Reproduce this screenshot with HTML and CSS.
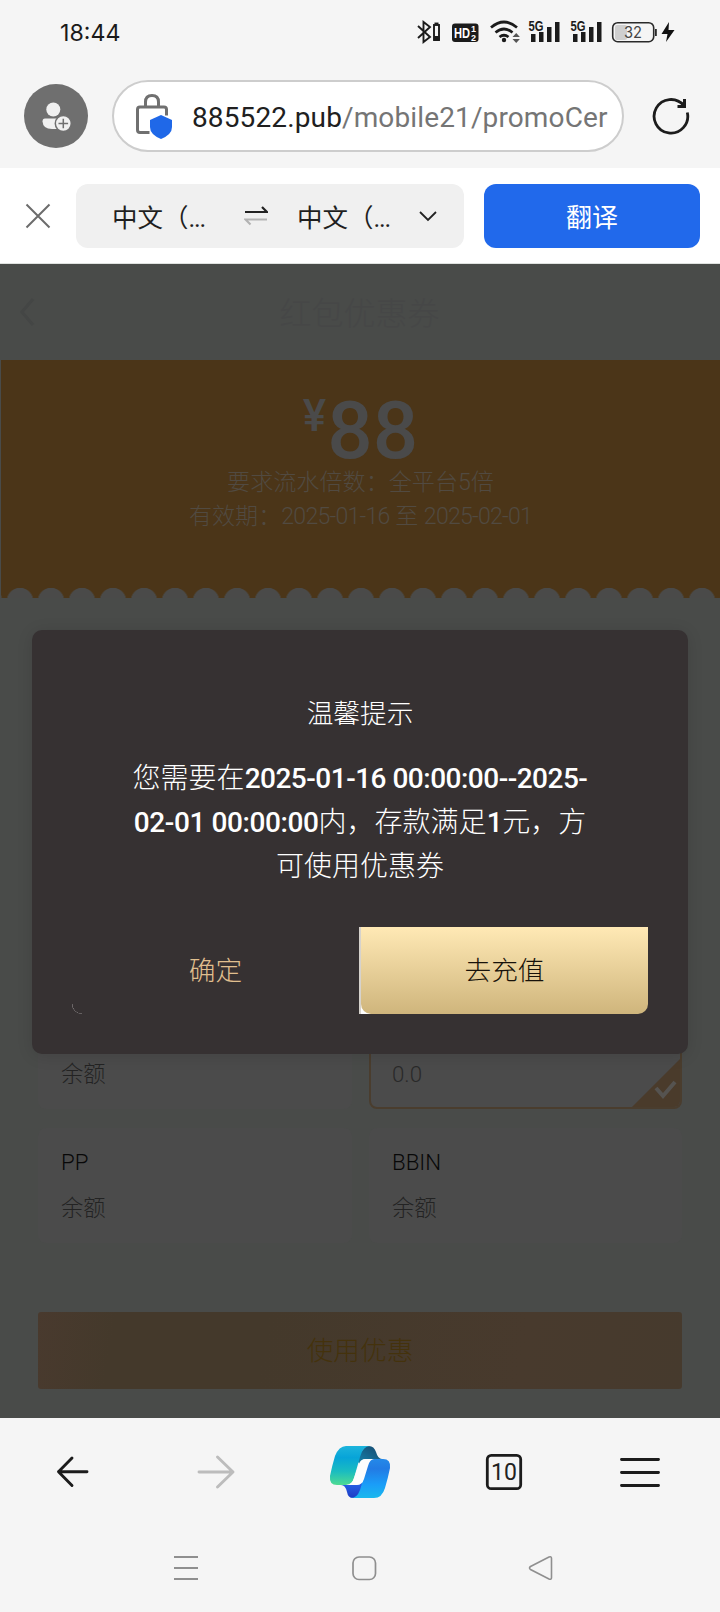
FILE: index.html
```html
<!DOCTYPE html>
<html lang="zh-CN">
<head>
<meta charset="utf-8">
<title>红包优惠券</title>
<link rel="stylesheet" href="styles.css">
</head>
<body>
<div class="screen">
  <header class="browser-top">
    <div class="status">
      <span class="clock">18:44</span>
      <svg class="status-icons" width="264" height="30" viewBox="412 17 264 30">
        <g fill="none" stroke="#1b1b1b" stroke-width="1.900">
          <path d="M418 26l12 11-6.500 5V22l6.500 5-12 11"/>
          <rect x="434" y="25" width="5" height="15"/><path d="M434.500 23.500h4"/>
        </g>
        <rect x="434" y="36" width="5.500" height="5" fill="#1b1b1b"/>
        <rect x="452" y="23.500" width="26.500" height="18.500" rx="3" fill="#1b1b1b"/>
        <text x="454" y="38.300" class="hd" textLength="16" lengthAdjust="spacingAndGlyphs">HD</text>
        <text x="471" y="32.300" class="hd-n">1</text><text x="471" y="40.800" class="hd-n">2</text>
        <g fill="none" stroke="#1b1b1b" stroke-width="2.700">
          <path d="M491 27.500q13-11 26 0"/><path d="M495.500 32.500q8.500-7 17 0"/><path d="M499.500 37q4.500-3.500 9 0"/>
        </g>
        <circle cx="504" cy="40" r="2.200" fill="#1b1b1b"/>
        <path d="M512.500 37l3.700-4 3.700 4zM512.500 39l3.700 4 3.700-4z" fill="#555"/>
        <g fill="#1b1b1b">
          <text x="528.500" y="31" class="net" textLength="15" lengthAdjust="spacingAndGlyphs">5G</text>
          <path d="M531 34h4.500v8H531zM539 32h4.500v10H539zM547 27h4.500v15H547zM555 22h4.500v20H555z"/>
          <text x="570.500" y="31" class="net" textLength="15" lengthAdjust="spacingAndGlyphs">5G</text>
          <path d="M573 34h4.500v8H573zM581 32h4.500v10H581zM589 27h4.500v15H589zM597 22h4.500v20H597z"/>
        </g>
        <rect x="615" y="25" width="12" height="15" rx="2" fill="#cfcfcf"/>
        <rect x="612.700" y="22.700" width="41" height="19" rx="5" fill="none" stroke="#2a2a2a" stroke-width="1.600"/>
        <path d="M655 29h1.800v7H655z" fill="#2a2a2a"/>
        <text x="624" y="38" class="bat" textLength="18" lengthAdjust="spacingAndGlyphs">32</text>
        <path d="M669 22l-7.500 12h6l-1.500 8 8.500-12h-6z" fill="#111"/>
      </svg>
    </div>
    <div class="address">
      <svg class="avatar" width="64" height="64" viewBox="24 84 64 64">
        <circle cx="56" cy="116" r="32" fill="#6f6f6f"/>
        <circle cx="53.300" cy="109.500" r="7" fill="#f0f0f0"/>
        <path d="M45 118.500h17v10.500H52q-9 0-9.500-7.500 0-3 2.500-3z" fill="#f0f0f0"/>
        <circle cx="63.300" cy="123.500" r="8" fill="#f0f0f0" stroke="#6f6f6f" stroke-width="1.500"/>
        <path d="M58.500 123.500h9.600M63.300 118.700v9.600" stroke="#6f6f6f" stroke-width="1.500"/>
      </svg>
      <div class="url">
        <svg width="40" height="50" viewBox="134 93 40 50">
          <g fill="none" stroke="#707070" stroke-width="3">
            <path d="M149.500 134.500H140q-2.500 0-2.500-2.500v-20.500q0-2.500 2.500-2.500h24q2.500 0 2.500 2.500v6"/>
            <path d="M145.500 109v-5q0-6.500 6.500-6.500t6.500 6.500v5"/>
          </g>
          <path d="M161 117l-11 5v7q0 7.500 11 12 11-4.500 11-12v-7z" fill="#1f68e8"/>
        </svg>
        <span class="url-text"><b>885522.pub</b>/mobile21/promoCer</span>
      </div>
      <svg class="reload" width="40" height="40" viewBox="652 96 40 40" fill="none" stroke="#1c1c1c" stroke-width="2.800">
        <path d="M688.300 112.500A16.800 16.800 0 1 1 684.800 105.500"/>
        <path d="M685.500 99v7.500H678.500" stroke-width="3"/>
      </svg>
    </div>
  </header>

  <section class="translate">
    <svg width="26" height="26" viewBox="0 0 26 26"><path d="M1.500 1.500l23 23M24.500 1.500l-23 23" stroke="#6c6c6c" stroke-width="2"/></svg>
    <div class="langs">
      <span>中文（<i>...</i></span>
      <svg class="swap" width="24" height="20" viewBox="244 206 24 20" fill="none" stroke-width="2.200">
        <path d="M245 212h22l-5-5" stroke="#222"/><path d="M267 219.500h-21.500l5 5" stroke="#b3b3b3"/>
      </svg>
      <span>中文（<i>...</i></span>
      <svg class="drop" width="18" height="12" viewBox="0 0 18 12"><path d="M1 2l8 8 8-8" fill="none" stroke="#222" stroke-width="1.800"/></svg>
    </div>
    <button class="go">翻译</button>
  </section>

  <main class="page">
    <div class="page-head">
      <svg class="back" width="18" height="30" viewBox="0 0 18 30"><path d="M16 2L5 15l11 13" fill="none" stroke="#444645" stroke-width="3"/></svg>
      <h1>红包优惠券</h1>
    </div>
    <section class="coupon">
      <div class="amount"><sup>¥</sup>88</div>
      <p>要求流水倍数：全平台5倍</p>
      <p class="valid">有效期：<span>2025-01-16</span> 至 <span>2025-02-01</span></p>
    </section>
    <section class="wallets">
      <div class="card"><span class="bal">余额</span></div>
      <div class="card on"><span class="bal">0.0</span>
        <svg class="tick" width="48" height="48" viewBox="0 0 48 48"><path d="M48 0v48H0z" fill="#4a3b2b"/><path d="M24 29l7 8 12-14" fill="none" stroke="#555350" stroke-width="4"/></svg>
      </div>
      <div class="card"><span class="name">PP</span><span class="bal">余额</span></div>
      <div class="card"><span class="name">BBIN</span><span class="bal">余额</span></div>
    </section>
    <button class="use">使用优惠</button>

    <div class="dialog">
      <h2>温馨提示</h2>
      <p>您需要在<b class="from">2025-01-16 00:00:00--2025-</b><br><b>02-01 00:00:00</b>内，存款满足<b>1</b>元，方<br>可使用优惠券</p>
      <div class="actions">
        <button class="ok">确定</button>
        <div class="pay-wrap"><button class="pay">去充值</button></div>
      </div>
    </div>
  </main>

  <nav class="tools">
    <svg width="720" height="108" viewBox="0 1418 720 108" fill="none" stroke-linecap="round" stroke-linejoin="round">
      <defs>
        <linearGradient id="ca" x1="0" y1="0" x2="0" y2="1"><stop offset="0" stop-color="#1db4dc"/><stop offset=".3" stop-color="#07a4d8"/><stop offset=".65" stop-color="#1abcc0"/><stop offset="1" stop-color="#4fdb92"/></linearGradient>
        <linearGradient id="cb" x1="0" y1="0" x2="0" y2="1"><stop offset="0" stop-color="#2489e8"/><stop offset=".25" stop-color="#227be4"/><stop offset=".65" stop-color="#1a9df8"/><stop offset="1" stop-color="#1ab8ed"/></linearGradient>
        <linearGradient id="cc" x1="1" y1="0" x2="0" y2="1"><stop offset="0" stop-color="#16466c"/><stop offset="1" stop-color="#1686b0"/></linearGradient>
        <linearGradient id="cd" x1="0" y1="0" x2="0" y2="1"><stop offset="0" stop-color="#2868ee"/><stop offset="1" stop-color="#1d3cc4"/></linearGradient>
      </defs>
      <path d="M58.500 1471.700H87M72 1458l-13.500 13.700 13.500 13.700" stroke="#1c1c1c" stroke-width="2.900"/>
      <path d="M199 1472h34M217.500 1457l15.500 15-15.500 15" stroke="#bcbcbc" stroke-width="2.900"/>
      <path d="M366 1446h3q5 0 7 6 2 7 6 7h-16q-4 0-6 5l-5-5z" fill="url(#cc)"/>
      <path d="M341 1485h12q5 0 7-5l4 6-6 12h-5q-5 0-6-6-1.500-7-6-7z" fill="url(#cd)"/>
      <path d="M346 1446h24q-7 0-10 11l-6 21q-2 7-8 7h-9q-8 0-7-9 2-10 5-20 4-10 11-10z" fill="url(#ca)"/>
      <path d="M374 1459h9q8 0 7 9-2 10-5 20-3 10-11 10h-23q6 0 9-8l7-24q2-7 6-7z" fill="url(#cb)"/>
      <path d="M365.500 1459H374q-4 0-6 7l-4 13q-2 6-7 6H346q6 0 8-7l5-14q1.500-5 6.500-5z" fill="#fdfdfd"/>
      <rect x="487.300" y="1455.300" width="33.400" height="33.400" rx="4" stroke="#1c1c1c" stroke-width="2.800"/>
      <text x="504" y="1480" class="tabs" text-anchor="middle">10</text>
      <path d="M621.500 1459.500h37M621.500 1472.500h37M621.500 1485.500h37" stroke="#1c1c1c" stroke-width="2.900"/>
    </svg>
  </nav>
  <nav class="system">
    <svg width="720" height="86" viewBox="0 1526 720 86" fill="none" stroke="#8f8f8f" stroke-width="1.900">
      <path d="M174 1557h24M174 1568h24M174 1579h24"/>
      <rect x="353" y="1557" width="22.500" height="22.500" rx="6" stroke-width="1.700"/>
      <path d="M530.500 1566.500L549 1557q2.500-1 2.500 1.500v19q0 2.500-2.500 1.500l-18.500-9.500q-2-1.500 0-3z" stroke-width="1.600"/>
    </svg>
  </nav>
</div>
</body>
</html>
```

FILE: styles.css
```css
* { box-sizing: border-box; }
body { margin: 0; font-family: Roboto, "Noto Sans CJK SC", sans-serif; }
h1, h2, p { margin: 0; font-weight: 300; }
button { border: 0; padding: 0; font: inherit; }
svg { display: block; flex: none; }

.screen { width: 720px; height: 1612px; display: flex; flex-direction: column; background: #f5f5f5; overflow: hidden; }

.browser-top { height: 168px; }
.status { height: 80px; padding: 17px 44px 0 60px; display: flex; justify-content: space-between; align-items: flex-start; }
.clock { font: 400 23.200px/32px Inter, sans-serif; color: #1a1a1a; }
.hd { font: 700 15px "Liberation Sans", sans-serif; fill: #fff; }
.hd-n { font: 700 9px "Liberation Sans", sans-serif; fill: #fff; }
.net { font: 700 14.500px "Liberation Sans", sans-serif; }
.bat { font: 400 15.500px Inter, sans-serif; fill: #444; }

.address { display: flex; align-items: center; height: 72px; padding-left: 24px; }
.url { display: flex; align-items: center; width: 512px; height: 72px; margin: 0 28px 0 24px; padding-left: 20px; border: 2px solid #cdcdcd; border-radius: 36px; background: #fff; overflow: hidden; }
.reload { margin-left: -1px; }
.url-text { margin-left: 18px; padding-top: 4px; font-size: 28px; line-height: 36px; letter-spacing: .13px; white-space: nowrap; color: #757575; }
.url-text b { font-weight: 400; color: #202020; }

.translate { display: flex; align-items: center; height: 96px; padding: 0 20px 0 25px; background: #fff; border-bottom: 1px solid #dfe2df; }
.langs { display: flex; align-items: center; width: 388px; height: 64px; margin: 0 20px 0 25px; padding-left: 36px; border-radius: 12px; background: #f0f0f0; font-size: 25.500px; color: #1f1f1f; white-space: nowrap; }
.langs span { width: 96px; padding-bottom: 1px; }
.langs i { font-style: normal; letter-spacing: -1.200px; }
.swap { margin: 0 29px 0 36px; }
.drop { margin-left: 26px; }
.go { width: 216px; height: 64px; padding-bottom: 1px; border-radius: 12px; background: #2169eb; color: #fff; font-size: 26px; }

.page { position: relative; height: 1154px; background: #494b49; }
.page-head { display: flex; align-items: center; height: 96px; padding-left: 17px; }
.page-head h1 { flex: 1; margin-right: 36px; padding-bottom: 3px; text-align: center; font-size: 32px; color: #464747; }
.coupon { height: 238px; margin-left: 1px; padding-top: 34px; text-align: center; color: #514a41; font-weight: 300; font-size: 23.100px; line-height: 34px;
  background: radial-gradient(circle at 15.500px 13px, #4a4a49 12.800px, transparent 13.500px) 3.500px 100% / 31px 10px repeat-x, #4b3518; }
.valid span { letter-spacing: -.75px; }
.amount { height: 72px; padding-top: 1px; font-size: 80px; font-weight: 500; line-height: 72px; color: #4a4a4a; }
.amount sup { display: inline-block; margin-right: 1px; font-size: 44px; line-height: 40px; vertical-align: 27px; }

.wallets { display: grid; grid-template-columns: 314px 313px; grid-auto-rows: 115px; gap: 19px 17px; padding: 396px 0 0 38px; }
.card { position: relative; display: flex; flex-direction: column; justify-content: flex-end; padding: 0 23px 18px; border-radius: 8px; background: #4b4b4b; font-size: 22.300px; font-weight: 300; line-height: 34px; }
.card.on { border: 2px solid #4a3d2e; padding: 0 21px 16px; overflow: hidden; }
.tick { position: absolute; right: 0; bottom: 0; }
.name { margin-bottom: 12px; color: #080808; }
.bal { color: #232323; }
.card.on .bal { color: #292929; }
.use { display: block; width: 644px; height: 77px; margin: 69px 0 0 38px; padding-bottom: 5px; border-radius: 3px; font-size: 26.700px; font-weight: 300; color: #44320c;
  background: linear-gradient(100deg, #493a2e, #44392b 12%, #44392b 35%, #483a2d 75%, #463a2d); }

.dialog { position: absolute; left: 32px; top: 366px; width: 656px; height: 424px; padding: 62px 40px 0; border-radius: 10px; background: #363132; box-shadow: 0 2px 16px rgba(0, 0, 0, .12); color: #fff; text-align: center; }
.dialog h2 { font-size: 26.700px; line-height: 44px; }
.dialog p { margin-top: 21px; font-size: 28px; line-height: 44px; white-space: nowrap; }
.dialog p b { font-weight: 500; letter-spacing: -.4px; }
.dialog p .from { letter-spacing: -.5px; }
.actions { display: flex; margin-top: 38px; height: 87px; }
.ok { position: relative; width: 287px; padding-bottom: 5px; background: none; color: #e0bf8e; font-size: 26.700px; font-weight: 300; }
/* thin highlight on the rounded corner */
.ok::after { content: ""; position: absolute; left: 0; bottom: 0; width: 10px; height: 10px; border-radius: 0 0 0 10px; background: radial-gradient(circle at 100% 0, transparent 9.200px, #a09b9c 9.800px); }
.pay-wrap { width: 289px; padding-left: 2px; background: linear-gradient(90deg, #d6d2cc 2px, #fff 2px, #fff 16px, transparent 16px); }
.pay { width: 287px; height: 87px; padding-bottom: 5px; border-radius: 0 0 10px 10px; background: linear-gradient(#ffe9b5, #cfb57c); color: #17120a; font-size: 26.700px; font-weight: 300; }

.tabs { font: 400 23px Roboto, sans-serif; fill: #222; }
.tools { height: 108px; }
.system { height: 86px; }
```
